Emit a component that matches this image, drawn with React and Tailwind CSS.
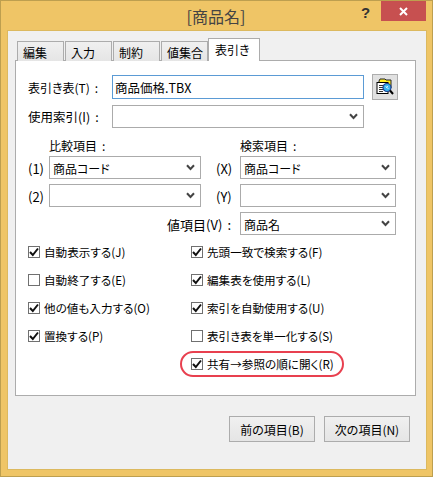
import React from "react";

function Chevron() {
  return (
    <svg width="9" height="7" viewBox="0 0 9 7" className="shrink-0">
      <path d="M1 1.2 L4.5 5 L8 1.2" fill="none" stroke="#444444" strokeWidth="2" />
    </svg>
  );
}

function Select({ value, className }) {
  return (
    <div className={"flex items-center justify-between bg-white border border-[#ababab] pl-[3px] pr-[5px] text-[12px] " + className}>
      <span className="pt-[2px]">{value}</span>
      <Chevron />
    </div>
  );
}

function Colon() {
  return <span className="ml-[5px]">:</span>;
}

function Check({ label, checked }) {
  return (
    <div className="flex items-center h-[28px]">
      <div className="flex items-center justify-center w-[12px] h-[12px] border border-[#707070] bg-white mr-[4px] shrink-0">
        {checked && (
          <svg width="10" height="10" viewBox="0 0 10 10">
            <path d="M1 5 L3.8 8 L9 1.5" fill="none" stroke="#111111" strokeWidth="2" />
          </svg>
        )}
      </div>
      <span className="text-[11.6px] pt-[2px] whitespace-nowrap">{label}</span>
    </div>
  );
}

function FinderIcon() {
  return (
    <svg width="18" height="18" viewBox="0 0 18 18">
      <path d="M3 3 L4 1 L9 1 L10 2 L15 2 L15 10 L3 10 Z" fill="#ffee22" stroke="#222222" strokeWidth="1" />
      <rect x="1" y="4.5" width="11" height="11" fill="#ffffff" stroke="#000000" strokeWidth="1" />
      <path d="M3 7.5 H7 M3 9.5 H7 M3 11.5 H7 M3 13.5 H7" stroke="#333333" strokeWidth="1" />
      <circle cx="11" cy="9.5" r="4" fill="#38b6f0" stroke="#1a3f8f" strokeWidth="1.2" />
      <path d="M9.5 8 L12.5 11 M12 8 L10 10" stroke="#c8f0ff" strokeWidth="1" />
      <path d="M14 12.5 L17 16" stroke="#000000" strokeWidth="2" />
    </svg>
  );
}

function Tab({ label }) {
  return (
    <div className="w-[47px] h-[20px] mr-px bg-gradient-to-b from-[#f0f0f0] to-[#e5e5e5] border border-b-0 border-[#acacac] flex items-center pl-[5px] pt-[2px] text-[12px] whitespace-nowrap">
      {label}
    </div>
  );
}

export default function App() {
  return (
    <div
      className="w-[433px] h-[477px] bg-[#efc566] border border-[#bd9f4f] flex flex-col text-black [font-feature-settings:'palt'] overflow-hidden"
      style={{ fontFamily: '"Noto Sans CJK JP", "Noto Sans", sans-serif' }}
    >
      <div className="relative h-[29px] shrink-0 flex items-center justify-center">
        <span className="text-[16px] text-[#444444] pr-[1px]">[商品名]</span>
        <span className="absolute left-[360px] top-[1px] text-[15px] font-bold text-[#333333]" style={{ fontFamily: '"Liberation Sans", sans-serif' }}>?</span>
        <div className="absolute left-[380px] top-0 w-[45px] h-[20px] bg-[#c75050] flex items-center justify-center">
          <svg width="9" height="9" viewBox="0 0 9 9">
            <path d="M1 1 L8 8 M8 1 L1 8" stroke="#ffffff" strokeWidth="2" />
          </svg>
        </div>
      </div>
      <div className="mx-[6px] w-[420px] h-[440px] bg-[#f0f0f0] border border-[#dcb95f] flex flex-col">
        <div className="flex items-end ml-[9px] h-[30px] shrink-0 relative z-10 -mb-px">
          <Tab label="編集" />
          <Tab label="入力" />
          <Tab label="制約" />
          <Tab label="値集合" />
          <div className="w-[52px] h-[23px] -ml-px bg-white border border-b-0 border-[#acacac] pl-[6px] pt-[2px] text-[12px] whitespace-nowrap">
            表引き
          </div>
        </div>
        <div className="ml-[7px] w-[401px] h-[336px] bg-white border border-[#acacac] pl-[12px] pt-[13px] flex flex-col">
          <div className="flex items-center h-[26px]">
            <span className="w-[84px] text-[12px] pt-[2px] whitespace-nowrap">表引き表(T)<Colon /></span>
            <div className="w-[252px] h-[24px] border border-[#5b9bd5] flex items-center pl-[2px] pt-[2px] text-[12.5px]">商品価格.TBX</div>
            <div className="ml-[8px] w-[26px] h-[26px] bg-[#e1e1e1] border border-[#adadad] flex items-center justify-center">
              <FinderIcon />
            </div>
          </div>
          <div className="flex items-center h-[23px] mt-[5px]">
            <span className="w-[84px] text-[12.5px] pt-[2px] whitespace-nowrap">使用索引(I)<Colon /></span>
            <Select value="" className="w-[252px] h-[23px]" />
          </div>
          <div className="flex items-center h-[18px] mt-[8px] pt-[2px] text-[12px]">
            <span className="ml-[21px] w-[191px]">比較項目<Colon /></span>
            <span>検索項目<Colon /></span>
          </div>
          <div className="flex items-center h-[23px] mt-[2px] text-[12px]">
            <span className="w-[21px] pt-[2px] text-[13px]">(1)</span>
            <Select value="商品コード" className="w-[152px] h-[23px]" />
            <span className="ml-[15px] w-[24px] pt-[2px] text-[13px]">(X)</span>
            <Select value="商品コード" className="w-[156px] h-[23px]" />
          </div>
          <div className="flex items-center h-[23px] mt-[5px] text-[12px]">
            <span className="w-[21px] pt-[2px] text-[13px]">(2)</span>
            <Select value="" className="w-[152px] h-[23px]" />
            <span className="ml-[15px] w-[24px] pt-[2px] text-[13px]">(Y)</span>
            <Select value="" className="w-[156px] h-[23px]" />
          </div>
          <div className="flex items-center justify-end h-[23px] mt-[5px] text-[12px] w-[368px]">
            <span className="mr-[9px] pt-[2px] text-[13px]">値項目(V)<Colon /></span>
            <Select value="商品名" className="w-[156px] h-[23px]" />
          </div>
          <div className="grid grid-cols-[163px_1fr] mt-[3px]">
            <Check checked label="自動表示する(J)" />
            <Check checked label="先頭一致で検索する(F)" />
            <Check label="自動終了する(E)" />
            <Check checked label="編集表を使用する(L)" />
            <Check checked label="他の値も入力する(O)" />
            <Check checked label="索引を自動使用する(U)" />
            <Check checked label="置換する(P)" />
            <Check label="表引き表を単一化する(S)" />
            <div />
            <div className="relative">
              <Check checked label="共有→参照の順に開く(R)" />
              <div className="absolute left-[-11px] top-[1px] w-[164px] h-[26px] border-2 border-[#e8404f] rounded-full" />
            </div>
          </div>
        </div>
        <div className="flex justify-end gap-[9px] mt-[20px] mr-[16px]">
          <div className="w-[86px] h-[26px] bg-gradient-to-b from-[#f0f0f0] to-[#e5e5e5] border border-[#acacac] flex items-center justify-center pt-[2px] text-[12px]">前の項目(B)</div>
          <div className="w-[86px] h-[26px] bg-gradient-to-b from-[#f0f0f0] to-[#e5e5e5] border border-[#acacac] flex items-center justify-center pt-[2px] text-[12px]">次の項目(N)</div>
        </div>
      </div>
    </div>
  );
}
